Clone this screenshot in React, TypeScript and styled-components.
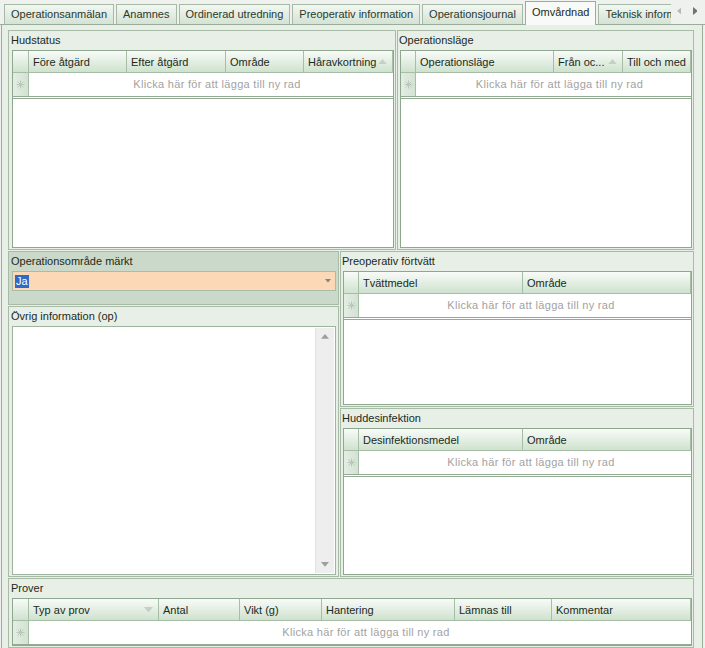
import * as React from 'react';
import styled, { createGlobalStyle, css } from 'styled-components';

/******************************************************************************/
/* Types and data */
/******************************************************************************/

type Column = {
  title: string;
  arrow?: 'up' | 'down';
};

type GridDef = {
  columns: Column[];
  template: string;
};

const PLACEHOLDER = 'Klicka här för att lägga till ny rad';

const tabs = [
  'Operationsanmälan',
  'Anamnes',
  'Ordinerad utredning',
  'Preoperativ information',
  'Operationsjournal',
  'Omvårdnad',
  'Teknisk information',
];

const hudstatus: GridDef = {
  template: '16px 98px 99px 78px 1fr',
  columns: [
    { title: 'Före åtgärd' },
    { title: 'Efter åtgärd' },
    { title: 'Område' },
    { title: 'Håravkortning', arrow: 'up' },
  ],
};

const operationslage: GridDef = {
  template: '15px 138px 69px 1fr',
  columns: [
    { title: 'Operationsläge' },
    { title: 'Från oc...', arrow: 'up' },
    { title: 'Till och med' },
  ],
};

const fortvatt: GridDef = {
  template: '15px 164px 1fr',
  columns: [{ title: 'Tvättmedel' }, { title: 'Område' }],
};

const desinfektion: GridDef = {
  template: '15px 164px 1fr',
  columns: [{ title: 'Desinfektionsmedel' }, { title: 'Område' }],
};

const prover: GridDef = {
  template: '16px 130px 81px 82px 133px 97px 1fr',
  columns: [
    { title: 'Typ av prov', arrow: 'down' },
    { title: 'Antal' },
    { title: 'Vikt (g)' },
    { title: 'Hantering' },
    { title: 'Lämnas till' },
    { title: 'Kommentar' },
  ],
};

/******************************************************************************/
/* Global */
/******************************************************************************/

const GlobalStyle = createGlobalStyle`
  html, body {
    margin: 0;
    padding: 0;
    background: #eef1ee;
  }
  body {
    font-family: "Liberation Sans", Arial, sans-serif;
    font-size: 11px;
    color: #1c2a1c;
  }
`;

const Window = styled.div`
  width: 705px;
  height: 648px;
  overflow: hidden;
  display: flex;
  flex-direction: column;
  background: #eef1ee;
`;

/******************************************************************************/
/* Tabs */
/******************************************************************************/

const TabStrip = styled.div`
  flex: none;
  height: 25px;
  display: flex;
  background: linear-gradient(to top, #98ae98 1px, transparent 1px);
`;

const TabsViewport = styled.div`
  width: 667px;
  margin-left: 4px;
  display: flex;
  align-items: flex-end;
  gap: 2px;
  overflow: hidden;
`;

const Tab = styled.div<{ $active?: boolean }>`
  flex: none;
  box-sizing: border-box;
  height: 20px;
  margin-bottom: 1px;
  padding: 0 6px;
  line-height: 18px;
  border: 1px solid #a5b9a5;
  border-bottom: none;
  background: linear-gradient(#f2f7f2, #d5e2d5);
  color: #2a3a2a;
  white-space: nowrap;

  ${(p) =>
    p.$active &&
    css`
      height: 24px;
      margin-bottom: 0;
      line-height: 21px;
      border-color: #98ae98;
      background: #f7faf7;
      color: #1c2a1c;
    `}
`;

const TabArrows = styled.div`
  flex: 1;
  display: flex;
  align-items: center;
  justify-content: space-around;
  padding: 0 2px 4px 0;
`;

/******************************************************************************/
/* Page and groups */
/******************************************************************************/

const TabPage = styled.div`
  flex: 1;
  min-height: 0;
  margin: 0 2px 0 1px;
  border-left: 1px solid #98ae98;
  border-right: 1px solid #98ae98;
  background: #e7efe7;
  padding: 5px 8px 0 6px;
  display: flex;
  flex-direction: column;
  gap: 1px;
`;

const Row = styled.div<{ $height?: number }>`
  display: flex;
  gap: 1px;
  ${(p) =>
    p.$height
      ? css`
          flex: none;
          height: ${p.$height}px;
        `
      : css`
          flex: 1;
          min-height: 0;
        `}
`;

const Column = styled.div<{ $width?: number }>`
  display: flex;
  flex-direction: column;
  gap: 1px;
  ${(p) => (p.$width ? `flex: none; width: ${p.$width}px;` : 'flex: 1; min-width: 0;')}
`;

const Group = styled.div<{ $width?: number; $height?: number; $dark?: boolean; $inset?: number }>`
  box-sizing: border-box;
  display: flex;
  flex-direction: column;
  border: 1px solid #a7bba7;
  background: ${(p) => (p.$dark ? '#cbd9cb' : '#e7efe7')};
  padding: 0 1px 1px ${(p) => p.$inset ?? 3}px;
  min-height: 0;
  min-width: 0;
  flex: ${(p) => (p.$width || p.$height ? 'none' : '1')};
  ${(p) => (p.$width ? `width: ${p.$width}px;` : '')}
  ${(p) => (p.$height ? `height: ${p.$height}px;` : '')}
`;

const GroupLabel = styled.div`
  flex: none;
  height: 19px;
  line-height: 19px;
  margin-left: -1px;
  white-space: nowrap;
`;

/******************************************************************************/
/* Data grid */
/******************************************************************************/

const GridBox = styled.div`
  flex: 1;
  min-height: 0;
  display: flex;
  flex-direction: column;
  border: 1px solid #8ea78e;
  background: #ffffff;
  overflow: hidden;
`;

const HeaderRow = styled.div<{ $template: string }>`
  flex: none;
  height: 21px;
  display: grid;
  grid-template-columns: ${(p) => p.$template};
  background: linear-gradient(#f8fbf8, #cfe2cf);
  border-bottom: 1px solid #a6bda6;
`;

const HeaderCell = styled.div`
  display: flex;
  align-items: center;
  justify-content: space-between;
  padding: 0 5px 0 4px;
  border-right: 1px solid #a6bda6;
  white-space: nowrap;
  overflow: hidden;
`;

const NewRow = styled.div`
  flex: none;
  height: 23px;
  display: flex;
  border-bottom: 3px double #93ab93;
`;

const RowSelector = styled.div<{ $width: number }>`
  flex: none;
  width: ${(p) => p.$width}px;
  box-sizing: border-box;
  display: flex;
  align-items: center;
  justify-content: center;
  background: linear-gradient(to right, #e4ede4, #d3e2d3);
  border-right: 1px solid #a6bda6;
`;

const Placeholder = styled.div`
  flex: 1;
  text-align: center;
  line-height: 23px;
  padding-left: 12px;
  color: #a2a2a2;
  letter-spacing: 0.3px;
  white-space: nowrap;
`;

/******************************************************************************/
/* Inputs */
/******************************************************************************/

const Combo = styled.div`
  flex: none;
  height: 20px;
  box-sizing: border-box;
  margin-right: 1px;
  display: flex;
  align-items: center;
  justify-content: space-between;
  padding: 0 4px 0 2px;
  border: 1px solid #a9bba9;
  background: #fdd8b6;
`;

const Selected = styled.span`
  background: #3169c6;
  color: #ffffff;
  padding: 0 1px;
  line-height: 13px;
`;

const MemoBox = styled.div`
  flex: 1;
  display: flex;
  justify-content: flex-end;
  margin-right: 1px;
  border: 1px solid #9fb49f;
  background: #ffffff;
`;

const ScrollBar = styled.div`
  width: 18px;
  margin: 1px 1px 1px 0;
  display: flex;
  flex-direction: column;
  justify-content: space-between;
  align-items: center;
  padding: 6px 0;
  background: #eeeeee;
  border-left: 1px solid #e2e2e2;
`;

/******************************************************************************/
/* Small drawings */
/******************************************************************************/

function Triangle(props: { dir: 'up' | 'down' | 'left' | 'right'; color: string; size?: number }) {
  const s = props.size || 7;
  const pts = {
    up: `0,${s * 0.6} ${s / 2},0 ${s},${s * 0.6}`,
    down: `0,0 ${s / 2},${s * 0.6} ${s},0`,
    left: `${s * 0.6},0 0,${s / 2} ${s * 0.6},${s}`,
    right: `0,0 ${s * 0.6},${s / 2} 0,${s}`,
  }[props.dir];
  const w = props.dir === 'left' || props.dir === 'right' ? s * 0.6 : s;
  const h = props.dir === 'left' || props.dir === 'right' ? s : s * 0.6;
  return (
    <svg width={w} height={h} viewBox={`0 0 ${w} ${h}`}>
      <polygon points={pts} fill={props.color} />
    </svg>
  );
}

function NewRowStar() {
  return (
    <svg width="9" height="9" viewBox="0 0 9 9">
      <g stroke="#b9c9b9" strokeWidth="1">
        <line x1="4.5" y1="0.5" x2="4.5" y2="8.5" />
        <line x1="0.5" y1="4.5" x2="8.5" y2="4.5" />
        <line x1="1.5" y1="1.5" x2="7.5" y2="7.5" />
        <line x1="7.5" y1="1.5" x2="1.5" y2="7.5" />
      </g>
    </svg>
  );
}

/******************************************************************************/
/* Composite parts */
/******************************************************************************/

function DataGrid(props: { def: GridDef }) {
  const selWidth = parseInt(props.def.template, 10);
  return (
    <GridBox>
      <HeaderRow $template={props.def.template}>
        <HeaderCell />
        {props.def.columns.map((c) => (
          <HeaderCell key={c.title}>
            {c.title}
            {c.arrow && <Triangle dir={c.arrow} color="#c3d0c3" size={9} />}
          </HeaderCell>
        ))}
      </HeaderRow>
      <NewRow>
        <RowSelector $width={selWidth}>
          <NewRowStar />
        </RowSelector>
        <Placeholder>{PLACEHOLDER}</Placeholder>
      </NewRow>
    </GridBox>
  );
}

function GridGroup(props: {
  title: string;
  def: GridDef;
  width?: number;
  height?: number;
  inset?: number;
}) {
  return (
    <Group $width={props.width} $height={props.height} $inset={props.inset}>
      <GroupLabel>{props.title}</GroupLabel>
      <DataGrid def={props.def} />
    </Group>
  );
}

/******************************************************************************/
/* App */
/******************************************************************************/

export default function App() {
  return (
    <Window>
      <GlobalStyle />
      <TabStrip>
        <TabsViewport>
          {tabs.map((t) => (
            <Tab key={t} $active={t === 'Omvårdnad'}>
              {t}
            </Tab>
          ))}
        </TabsViewport>
        <TabArrows>
          <Triangle dir="left" color="#b4b9b4" size={8} />
          <Triangle dir="right" color="#6e746e" size={8} />
        </TabArrows>
      </TabStrip>

      <TabPage>
        <Row $height={220}>
          <GridGroup title="Hudstatus" def={hudstatus} width={388} />
          <GridGroup title="Operationsläge" def={operationslage} inset={2} />
        </Row>

        <Row $height={326}>
          <Column $width={331}>
            <Group $height={54} $dark>
              <GroupLabel>Operationsområde märkt</GroupLabel>
              <Combo>
                <Selected>Ja</Selected>
                <Triangle dir="down" color="#7d857d" size={6} />
              </Combo>
            </Group>
            <Group>
              <GroupLabel>Övrig information (op)</GroupLabel>
              <MemoBox>
                <ScrollBar>
                  <Triangle dir="up" color="#9aa09a" size={8} />
                  <Triangle dir="down" color="#9aa09a" size={8} />
                </ScrollBar>
              </MemoBox>
            </Group>
          </Column>
          <Column>
            <GridGroup title="Preoperativ förtvätt" def={fortvatt} height={156} inset={2} />
            <GridGroup title="Huddesinfektion" def={desinfektion} inset={2} />
          </Column>
        </Row>

        <Row>
          <GridGroup title="Prover" def={prover} />
        </Row>
      </TabPage>
    </Window>
  );
}
